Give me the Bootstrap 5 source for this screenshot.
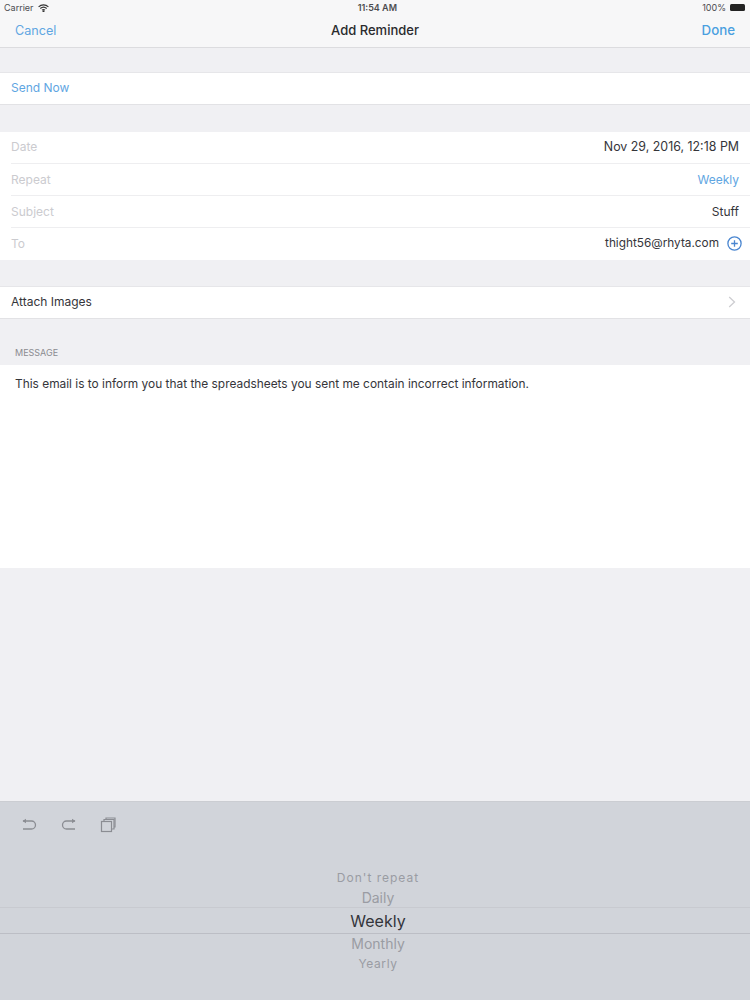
<!DOCTYPE html>
<html lang="en">
<head>
  <meta charset="UTF-8">
  <meta name="viewport" content="width=device-width, initial-scale=1.0">
  <title>Add Reminder</title>
  <link href="https://cdn.jsdelivr.net/npm/bootstrap@5.3.3/dist/css/bootstrap.min.css" rel="stylesheet">
  <style>
    body {
      font-family: Inter, "Liberation Sans", sans-serif;
      background-color: #f0f0f3;
      color: #35353a;
      font-size: 12px;
    }

    .screen {
      height: 1000px;
      overflow: hidden;
    }

    .top-bar {
      height: 48px;
      background-color: #f7f7f8;
      border-bottom: 1px solid #dcdcdf;
    }

    .status-row {
      height: 15px;
      padding: 0 4px;
      font-size: 9px;
      color: #4c4c50;
    }

    .status-time {
      padding-left: 4px;
      font-weight: 600;
    }

    .nav-row {
      height: 32px;
      padding: 0 15px;
    }

    .nav-side {
      flex: 1 1 0;
    }

    .nav-cancel {
      color: #5fa6e2;
      font-size: 12.6px;
    }

    .nav-done {
      color: #4a9fe0;
      font-size: 13.3px;
      font-weight: 500;
    }

    .nav-title {
      font-size: 13px;
      font-weight: 500;
      color: #2a2a2d;
    }

    .batt {
      width: 15px;
      height: 7px;
      background-color: #222;
      border-radius: 1.5px;
      margin-right: 1px;
    }

    .cell-group {
      background-color: #fff;
    }

    .cell-single {
      background-color: #fff;
      height: 33px;
      padding: 0 11px 1px;
      border-top: 1px solid #e6e6e9;
      border-bottom: 1px solid #e2e2e5;
    }

    .cell-row {
      height: 32px;
      margin-left: 11px;
      padding-right: 11px;
      border-bottom: 1px solid #eeeef0;
    }

    .cell-row:last-child {
      border-bottom: 0;
    }

    .cell-lift {
      padding-bottom: 1px;
    }

    .cell-label {
      color: #cbcbcf;
      line-height: 18px;
    }

    .cell-date {
      font-size: 12.4px;
      line-height: 18px;
    }

    .cell-email {
      font-size: 11.8px;
    }

    .blue-text {
      color: #5fa6e2;
    }

    .plus-icon {
      margin-right: -3px;
    }

    .chev-icon {
      margin-right: 3px;
    }

    .gap-send {
      height: 24px;
    }

    .gap-date {
      height: 27px;
    }

    .gap-attach {
      height: 26px;
    }

    .msg-head {
      height: 46px;
      padding: 0 15px 6px;
      font-size: 9px;
      color: #8b8b90;
    }

    .msg-body {
      height: 203px;
      background-color: #fff;
      padding: 10px 15px;
      font-size: 11.9px;
    }

    .filler {
      height: 233px;
    }

    .key-area {
      height: 199px;
      background-color: #d1d4da;
      border-top: 1px solid #cbcdd2;
    }

    .tool-row {
      height: 46px;
      padding: 0 20px;
      gap: 22px;
    }

    .picker-wrap {
      margin-top: 20px;
      text-align: center;
      color: #9a9ca3;
    }

    .picker-wrap > div {
      padding-left: 6px;
    }

    .pick-far {
      font-size: 12px;
      height: 20px;
      line-height: 20px;
    }

    .pick-top {
      letter-spacing: 1px;
    }

    .pick-low {
      letter-spacing: .6px;
    }

    .pick-near {
      font-size: 14px;
      height: 20px;
      line-height: 20px;
    }

    .pick-now {
      font-size: 16px;
      height: 27px;
      line-height: 26px;
      margin-top: -1px;
      color: #33343a;
      border-top: 1px solid #c8cad0;
      border-bottom: 1px solid #bcbec5;
    }
  </style>
</head>
<body>
<div class="screen d-flex flex-column">

  <!-- Status and nav bar -->
  <div class="top-bar">
    <div class="status-row d-flex justify-content-between align-items-center">
      <div class="d-flex align-items-center gap-1">
        <span>Carrier</span>
        <svg width="11" height="8" viewBox="0 0 11 8" fill="none" stroke="#333" stroke-width="1.1"><path d="M.6 2.800C3.300.2 7.700.2 10.400 2.800"/><path d="M2.300 4.500C4.100 2.900 6.900 2.900 8.700 4.500"/><path d="M4 6.100C4.900 5.400 6.100 5.400 7 6.100"/><circle cx="5.500" cy="7.200" r=".5" fill="#333"/></svg>
      </div>
      <span class="status-time">11:54 AM</span>
      <div class="d-flex align-items-center gap-1">
        <span>100%</span>
        <div class="batt"></div>
      </div>
    </div>
    <div class="nav-row d-flex align-items-center">
      <div class="nav-side"><span class="nav-cancel">Cancel</span></div>
      <span class="nav-title">Add Reminder</span>
      <div class="nav-side text-end"><span class="nav-done">Done</span></div>
    </div>
  </div>

  <div class="gap-send"></div>
  <div class="cell-single d-flex align-items-center blue-text">Send Now</div>
  <div class="gap-date"></div>

  <div class="cell-group">
    <div class="cell-row cell-lift d-flex justify-content-between align-items-center">
      <span class="cell-label">Date</span><span class="cell-date">Nov 29, 2016, 12:18 PM</span>
    </div>
    <div class="cell-row d-flex justify-content-between align-items-center">
      <span class="cell-label">Repeat</span><span class="blue-text">Weekly</span>
    </div>
    <div class="cell-row d-flex justify-content-between align-items-center">
      <span class="cell-label">Subject</span><span>Stuff</span>
    </div>
    <div class="cell-row cell-lift d-flex justify-content-between align-items-center">
      <span class="cell-label">To</span>
      <div class="d-flex align-items-center gap-2">
        <span class="cell-email">thight56@rhyta.com</span>
        <svg class="plus-icon" width="15" height="15" viewBox="0 0 15 15" fill="none" stroke="#4a86d0" stroke-width="1.3"><circle cx="7.500" cy="7.500" r="6.600"/><path d="M7.500 4.200v6.600M4.200 7.500h6.600"/></svg>
      </div>
    </div>
  </div>

  <div class="gap-attach"></div>
  <div class="cell-single d-flex justify-content-between align-items-center">
    <span>Attach Images</span>
    <svg class="chev-icon" width="8" height="12" viewBox="0 0 8 12" fill="none" stroke="#cdcdd1" stroke-width="1.300"><path d="M1.200 1 6.500 6 1.200 11"/></svg>
  </div>

  <div class="msg-head d-flex align-items-end">MESSAGE</div>
  <div class="msg-body">This email is to inform you that the spreadsheets you sent me contain incorrect information.</div>
  <div class="filler"></div>

  <!-- Keyboard accessory and picker -->
  <div class="key-area">
    <div class="tool-row d-flex align-items-center">
      <svg width="18" height="16" viewBox="0 0 18 16" fill="none" stroke="#8b8d93" stroke-width="1.300"><path d="M3 4h8.500a3.800 3.800 0 0 1 0 8H3"/><path d="M6 1.700 2.500 4 6 6.300z" fill="#8b8d93" stroke="none"/></svg>
      <svg width="18" height="16" viewBox="0 0 18 16" fill="none" stroke="#8b8d93" stroke-width="1.300"><path d="M15 4H6.500a3.800 3.800 0 0 0 0 8H15"/><path d="M12 1.700 15.500 4 12 6.300z" fill="#8b8d93" stroke="none"/></svg>
      <svg width="16" height="16" viewBox="0 0 16 16" fill="none" stroke="#8b8d93" stroke-width="1.200"><rect x="1.500" y="4.500" width="10" height="10"/><path d="M4 4.500V2.500h10v9.500h-2.500"/><path d="M6 2.500V1h9v9h-1"/></svg>
    </div>
    <div class="picker-wrap">
      <div class="pick-far pick-top">Don't repeat</div>
      <div class="pick-near">Daily</div>
      <div class="pick-now">Weekly</div>
      <div class="pick-near">Monthly</div>
      <div class="pick-far pick-low">Yearly</div>
    </div>
  </div>
</div>
<script src="https://cdn.jsdelivr.net/npm/bootstrap@5.3.3/dist/js/bootstrap.bundle.min.js"></script>
</body>
</html>
